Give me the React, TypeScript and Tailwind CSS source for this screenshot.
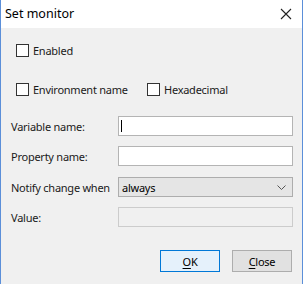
import React from "react";

function Check({ label }: { label: string }) {
  return (
    <div className="flex items-center h-[13px]">
      <div className="w-[13px] h-[13px] border border-[#333333] bg-white box-border" />
      <span className="ml-[4px] leading-none whitespace-nowrap">{label}</span>
    </div>
  );
}

function Row({ label, children }: { label: string; children: React.ReactNode }) {
  return (
    <div className="flex items-center h-[20px]">
      <div className="w-[117px] pl-[10px] shrink-0 leading-none whitespace-nowrap">{label}</div>
      {children}
    </div>
  );
}

export default function App() {
  return (
    <div
      className="w-[303px] h-[284px] bg-[#f0f0f0] border-x border-[#5b8fd9] box-border flex flex-col text-[11px] tracking-[-0.25px] text-[#1a1a1a] overflow-hidden"
      style={{ fontFamily: '"Noto Sans", "Open Sans", sans-serif' }}
    >
      <div className="h-[28px] bg-white flex items-center justify-between shrink-0">
        <span className="ml-[4px] text-[12.5px] tracking-normal text-black">Set monitor</span>
        <svg width="12" height="12" viewBox="0 0 12 12" className="mr-[10px]">
          <path d="M1 1 L11 11 M11 1 L1 11" stroke="#222" strokeWidth="1.1" />
        </svg>
      </div>
      <div className="flex flex-col pr-[9px]">
        <div className="mt-[16px] pl-[15px]">
          <Check label="Enabled" />
        </div>
        <div className="mt-[26px] pl-[15px] flex">
          <div className="w-[131px]">
            <Check label="Environment name" />
          </div>
          <Check label="Hexadecimal" />
        </div>
        <div className="mt-[20px]">
          <Row label="Variable name:">
            <div className="flex-1 h-[20px] bg-white border border-[#b4b4b4] box-border flex items-center">
              <div className="ml-[2px] w-px h-[12px] bg-black" />
            </div>
          </Row>
        </div>
        <div className="mt-[10px]">
          <Row label="Property name:">
            <div className="flex-1 h-[20px] bg-white border border-[#b4b4b4] box-border" />
          </Row>
        </div>
        <div className="mt-[11px]">
          <Row label="Notify change when">
            <div className="flex-1 h-[20px] bg-[#e5e5e5] border border-[#adadad] box-border flex items-center justify-between">
              <span className="ml-[3px] leading-none text-black">always</span>
              <svg width="9" height="5" viewBox="0 0 9 5" className="mr-[6px]">
                <path d="M0.5 0.5 L4.5 4.5 L8.5 0.5" stroke="#555" strokeWidth="1" fill="none" />
              </svg>
            </div>
          </Row>
        </div>
        <div className="mt-[10px]">
          <Row label="Value:">
            <div className="flex-1 h-[20px] bg-[#f0f0f0] border border-[#cccccc] box-border" />
          </Row>
        </div>
        <div className="mt-[23px] mr-[1px] flex justify-end">
          <button className="w-[60px] h-[22px] bg-[#e5f1fb] border border-[#0078d7] box-border text-black leading-none">
            <span className="underline underline-offset-2">O</span>K
          </button>
          <button className="ml-[12px] w-[60px] h-[22px] bg-[#e1e1e1] border border-[#adadad] box-border text-black leading-none">
            <span className="underline underline-offset-2">C</span>lose
          </button>
        </div>
      </div>
    </div>
  );
}
